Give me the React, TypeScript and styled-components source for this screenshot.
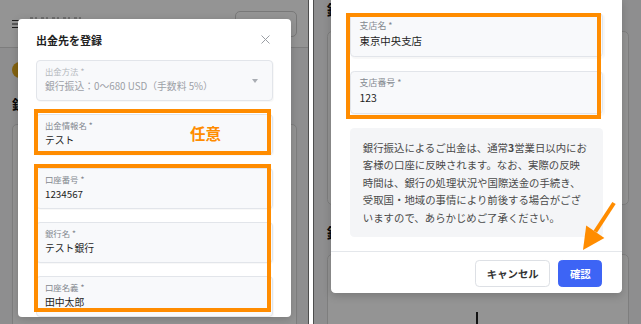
import styled, { createGlobalStyle } from "styled-components";

const ORANGE = "#ff8c00";

const GlobalStyle = createGlobalStyle`
  html, body {
    margin: 0;
    padding: 0;
  }
  body {
    font-family: "Noto Sans CJK JP", "Noto Sans", sans-serif;
    color: #222;
  }
`;

const Stage = styled.div`
  display: flex;
  gap: 4px;
  width: 641px;
  height: 324px;
  background: #fff;
  overflow: hidden;
`;

const Panel = styled.div<{ $side: "left" | "right" }>`
  position: relative;
  flex: none;
  width: ${(p) => (p.$side === "left" ? "308px" : "327px")};
  height: 324px;
  overflow: hidden;
  background: #f4f5f7;
  border-left: ${(p) => (p.$side === "right" ? "1px solid #4d4d4d" : "none")};
  border-right: ${(p) => (p.$side === "left" ? "1px solid #4d4d4d" : "none")};
`;

// the phone screen, the right shot is a bit bigger
const Screen = styled.div<{ $zoom: number }>`
  position: relative;
  width: 308px;
  height: ${(p) => 324 / p.$zoom}px;
  zoom: ${(p) => p.$zoom};
`;

/* ---------- page behind the dialog ---------- */

const Page = styled.div`
  display: flex;
  flex-direction: column;
  height: 100%;
`;

const TopBar = styled.header`
  flex: none;
  display: flex;
  align-items: center;
  gap: 9px;
  height: 48px;
  box-sizing: border-box;
  padding: 0 11px 0 12px;
  background: #fff;
  border-bottom: 1px solid #d8d8d8;
`;

const Burger = styled.svg`
  flex: none;
  width: 9px;
  height: 8px;
`;

// title of the page behind, only its top edge peeks out
const TopTitle = styled.div`
  flex: 1;
  align-self: flex-start;
  height: 2px;
  margin-top: 17px;
  max-width: 52px;
  background: repeating-linear-gradient(90deg, #444 0 3px, transparent 3px 5px, #444 5px 7px, transparent 7px 11px);
  opacity: 0.35;
`;

const TopButton = styled.div`
  width: 62px;
  height: 26px;
  box-sizing: border-box;
  border: 1px solid #cfcfcf;
  border-radius: 5px;
  margin-left: auto;
`;

const PageBody = styled.div<{ $padTop: number }>`
  display: flex;
  flex-direction: column;
  gap: 17px;
  padding: ${(p) => p.$padTop}px 11px 0 12px;
`;

const CoinRow = styled.div`
  display: flex;
  align-items: center;
  height: 16px;
`;

const Coin = styled.span`
  width: 16px;
  height: 16px;
  border-radius: 50%;
  background: #e2a91c;
`;

const Section = styled.section`
  display: flex;
  flex-direction: column;
  gap: 11px;
`;

const SectionTitle = styled.h3`
  margin: 0;
  font-size: 13px;
  line-height: 18px;
  font-weight: 700;
  color: #111;
`;

const Card = styled.div<{ $height: number }>`
  display: flex;
  justify-content: center;
  height: ${(p) => p.$height}px;
  background: #fff;
  border: 1px solid #dadada;
  border-radius: 5px;
`;

const Caret = styled.span`
  width: 2px;
  height: 22px;
  margin: 54px 2px 0 0;
  background: #222;
`;

const Dim = styled.div`
  position: absolute;
  inset: 0;
  background: rgba(0, 0, 0, 0.42);
`;

/* ---------- dialog ---------- */

const Modal = styled.div<{ $top: number; $left: number; $width: number; $cut?: boolean }>`
  position: absolute;
  top: ${(p) => p.$top}px;
  left: ${(p) => p.$left}px;
  width: ${(p) => p.$width}px;
  background: #fff;
  border-radius: ${(p) => (p.$cut ? "0 0 4px 4px" : "4px")};
  box-shadow: 0 2px 8px rgba(0, 0, 0, 0.18);
`;

const ModalHeader = styled.div`
  display: flex;
  align-items: center;
  justify-content: space-between;
  height: 41px;
  padding: 0 21px 0 18px;
`;

const ModalTitle = styled.h2`
  margin: 0;
  font-size: 11px;
  line-height: 16px;
  font-weight: 700;
  color: #222;
`;

const CloseIcon = styled.svg`
  width: 9px;
  height: 9px;
`;

const ModalBody = styled.div<{ $padTop?: number }>`
  display: flex;
  flex-direction: column;
  gap: 13px;
  padding: ${(p) => p.$padTop ?? 0}px 18px 0;
`;

const Field = styled.div`
  display: flex;
  align-items: flex-start;
  height: 41px;
  box-sizing: border-box;
  padding: 5px 8px 0;
  background: #f8f9fb;
  border: 1px solid #e2e5ea;
  border-radius: 4px;
  box-shadow: 1px 1px 1px rgba(0, 0, 0, 0.03);
`;

const FieldText = styled.div`
  flex: 1;
  display: flex;
  flex-direction: column;
  gap: 2px;
`;

const FieldLabel = styled.span<{ $muted?: boolean }>`
  font-size: 8.4px;
  line-height: 11px;
  color: ${(p) => (p.$muted ? "#b4b8bd" : "#83888f")};
`;

const FieldValue = styled.span<{ $muted?: boolean }>`
  font-size: 9.8px;
  line-height: 14px;
  color: ${(p) => (p.$muted ? "#9ca0a6" : "#1e1e1e")};
  white-space: nowrap;
`;

const SelectArrow = styled.span`
  margin: 13px 6px 0 0;
  border-left: 3px solid transparent;
  border-right: 3px solid transparent;
  border-top: 4px solid #a9adb3;
`;

const Marked = styled.div`
  position: relative;
  display: flex;
  flex-direction: column;
  gap: 13px;
`;

const MarkFrame = styled.div<{ $t: number; $r: number; $b: number; $l: number }>`
  position: absolute;
  top: ${(p) => p.$t}px;
  right: ${(p) => p.$r}px;
  bottom: ${(p) => p.$b}px;
  left: ${(p) => p.$l}px;
  border: 4px solid ${ORANGE};
  pointer-events: none;
`;

const MarkNote = styled.span`
  position: absolute;
  top: 10px;
  left: 152px;
  font-size: 15.5px;
  line-height: 20px;
  font-weight: 700;
  color: ${ORANGE};
`;

const Notice = styled.p`
  margin: 0;
  padding: 10px 12px;
  background: #f4f5f7;
  border-radius: 4px;
  font-size: 9.8px;
  line-height: 16.5px;
  color: #4a4a4a;
  white-space: nowrap;
`;

const ModalFooter = styled.div`
  display: flex;
  justify-content: flex-end;
  gap: 7.5px;
  margin-top: 13px;
  padding: 7.5px 18.5px 5.5px;
  border-top: 1px solid #e4e7eb;
`;

const Button = styled.button<{ $primary?: boolean }>`
  height: 25.5px;
  padding: 0 10px;
  border-radius: 4px;
  font-family: inherit;
  font-size: 9.8px;
  font-weight: 700;
  border: 1px solid ${(p) => (p.$primary ? "#3d64f5" : "#dde0e5")};
  background: ${(p) => (p.$primary ? "#3d64f5" : "#fff")};
  color: ${(p) => (p.$primary ? "#fff" : "#333")};
`;

const Arrow = styled.svg`
  position: absolute;
  left: 255px;
  top: 188px;
  width: 55px;
  height: 70px;
  pointer-events: none;
`;

function InputField({ label, value }: { label: string; value: string }) {
  return (
    <Field>
      <FieldText>
        <FieldLabel>{label}</FieldLabel>
        <FieldValue>{value}</FieldValue>
      </FieldText>
    </Field>
  );
}

function LeftShot() {
  return (
    <Panel $side="left">
      <Screen $zoom={1}>
        <Page>
          <TopBar>
            <Burger viewBox="0 0 9 8">
              <path d="M0 .5h9M0 4h9M0 7.5h9" stroke="#333" strokeWidth="1" />
            </Burger>
            <TopTitle />
            <TopButton />
          </TopBar>
          <PageBody $padTop={14}>
            <CoinRow>
              <Coin />
            </CoinRow>
            <Section>
              <SectionTitle>銀行口座</SectionTitle>
              <Card $height={300} />
            </Section>
          </PageBody>
        </Page>
        <Dim />
        <Modal $top={19} $left={18} $width={273}>
          <ModalHeader>
            <ModalTitle>出金先を登録</ModalTitle>
            <CloseIcon viewBox="0 0 9 9">
              <path d="M.5.5l8 8M8.5.5l-8 8" stroke="#9a9ea4" strokeWidth="1" />
            </CloseIcon>
          </ModalHeader>
          <ModalBody>
            <Field>
              <FieldText>
                <FieldLabel $muted>出金方法 *</FieldLabel>
                <FieldValue $muted>銀行振込：0〜680 USD（手数料 5%）</FieldValue>
              </FieldText>
              <SelectArrow />
            </Field>
            <Marked>
              <InputField label="出金情報名 *" value="テスト" />
              <MarkFrame $t={-5} $r={2} $b={0} $l={-2}>
                <MarkNote>任意</MarkNote>
              </MarkFrame>
            </Marked>
            <Marked>
              <InputField label="口座番号 *" value="1234567" />
              <InputField label="銀行名 *" value="テスト銀行" />
              <InputField label="口座名義 *" value="田中太郎" />
              <MarkFrame $t={-4} $r={2} $b={5} $l={-2} />
            </Marked>
          </ModalBody>
        </Modal>
      </Screen>
    </Panel>
  );
}

function RightShot() {
  return (
    <Panel $side="right">
      <Screen $zoom={1.062}>
        <Page>
          <PageBody $padTop={0}>
            <Section>
              <SectionTitle>銀行口座</SectionTitle>
              <Card $height={162} />
            </Section>
            <Section>
              <SectionTitle>銀行口座</SectionTitle>
              <Card $height={120}>
                <Caret />
              </Card>
            </Section>
          </PageBody>
        </Page>
        <Dim />
        <Modal $top={0} $left={16} $width={274} $cut>
          <ModalBody $padTop={12.7}>
            <Marked>
              <InputField label="支店名 *" value="東京中央支店" />
              <InputField label="支店番号 *" value="123" />
              <MarkFrame $t={0} $r={2} $b={-4} $l={-4} />
            </Marked>
            <Notice>
              銀行振込によるご出金は、通常<b>3</b>営業日以内にお
              <br />
              客様の口座に反映されます。なお、実際の反映
              <br />
              時間は、銀行の処理状況や国際送金の手続き、
              <br />
              受取国・地域の事情により前後する場合がござ
              <br />
              いますので、あらかじめご了承ください。
            </Notice>
          </ModalBody>
          <ModalFooter>
            <Button>キャンセル</Button>
            <Button $primary>確認</Button>
          </ModalFooter>
        </Modal>
      </Screen>
      <Arrow viewBox="0 0 55 70">
        <path d="M45 15L26.3 43.7" stroke={ORANGE} strokeWidth="4" />
        <path d="M14 62L17.2 37.5L35.4 49.9Z" fill={ORANGE} />
      </Arrow>
    </Panel>
  );
}

export default function App() {
  return (
    <>
      <GlobalStyle />
      <Stage>
        <LeftShot />
        <RightShot />
      </Stage>
    </>
  );
}
